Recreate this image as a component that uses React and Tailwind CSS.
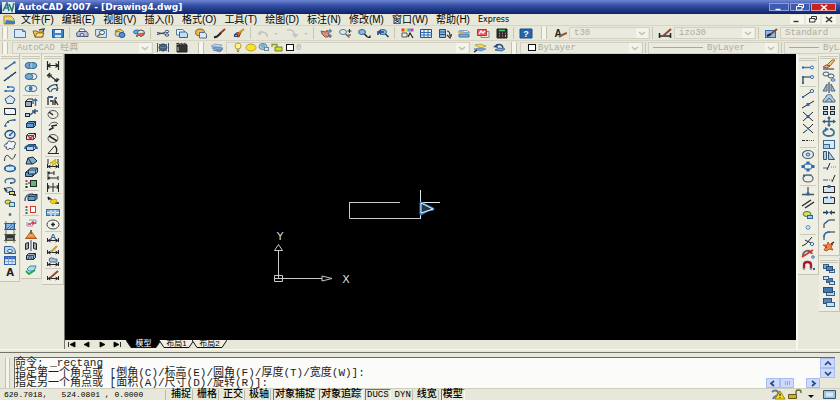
import React from "react";

const K = "#25282b";
const B = "#2a69ad";
const L = "#a9cdee";
const Y = "#f2d020";
const R = "#d8342c";
const G = "#3a9a4c";

const P = ({ d, s = K, f = "none", w = 1 }) => <path d={d} stroke={s} fill={f} strokeWidth={w} />;
const D = ({ x, y, c = B, r = 1 }) => <rect x={x - r} y={y - r} width={2 * r} height={2 * r} fill={c} />;
const O = ({ x = 7, y = 5.5, rx = 4, ry = 3, s = K, f = "none", w = 1 }) => (
  <ellipse cx={x} cy={y} rx={rx} ry={ry} stroke={s} fill={f} strokeWidth={w} />
);
const Q = ({ x, y, w = 4, h = 3, s = K, f = L }) => (
  <rect x={x} y={y} width={w} height={h} stroke={s} fill={f} />
);
const Box = ({ x = 2.5, y = 3.5, f = "#5f9bd3" }) => (
  <g>
    <path d={`M${x} ${y}l2-2h7v4l-2 2h-7z`} fill={f} stroke="#1c2c40" />
    <path d={`M${x} ${y}h7v4M${x + 7} ${y}l2-2`} fill="none" stroke="#1c2c40" strokeWidth="0.8" />
  </g>
);
const Dim = () => <P d="M1.5 6v4M12.5 6v4M2 8.5h10M4.5 7l-2.5 1.5 2.5 1.5M9.5 7l2.5 1.5-2.5 1.5" />;

const art = {
  // standard toolbar
  new: <><P d="M1.5 1.5h8l3 2v6h-11z" s="#4c7ba6" f="#d5ebfb" /><P d="M9.500 1.500v2h3" s="#4c7ba6" /></>,
  open: <><P d="M1 3h4l1 1h5v5H3z" s="#8a6a1c" f="#f0c75a" /><P d="M3 9l2-4h7l-2 4z" s="#8a6a1c" f="#ffe28c" /><P d="M7 2l5-1-1 3" s="#444" w={1.4} /></>,
  save: <><P d="M1.500 1.500h11v8h-11z" s="#1d5796" f="#3b86cf" /><P d="M4 2h6v3H4z" s="none" f="#e6f1fb" /><P d="M4 7h6v2.500H4z" s="none" f="#cfe0f2" /></>,
  print: <><P d="M4 4l1-3h4l2 3" s="#56618c" f="#fff" /><P d="M1.500 5l2-1.500h8l1.500 2v3h-11z" s="#4d5680" f="#b9c0dc" /><O y={7} rx={2} ry={1.5} s="#4d5680" f="#e8e8f4" /></>,
  preview: <><P d="M1.500 1.500h11v8h-8l-3-2z" s="#5d82a8" f="#cbe4f8" /><O x={8} y={4.5} rx={2.5} ry={2} s="#3a5370" f="#f4fbff" /><P d="M6 6L3 9" s="#9c5c28" w={1.6} /></>,
  publish: <><P d="M2 3l5-2 4 3-5 2z" s="#947520" f="#f5d45e" /><O x={5} y={6} rx={3} ry={2.5} s="#777" f="#ead8a0" /><O x={9} y={7} rx={3} ry={2.5} s="#23559c" f="#4f93dd" /></>,
  dwf: <><O x={5} y={4} rx={3.500} ry={2} s="#2a69ad" f="#6ba9e0" /><O x={9} y={5} rx={3.500} ry={3} s="#555" f="#d9e2ea" /><P d="M6 6l3 3 3-4z" s="#a6362b" f="#e46a48" w={0.6} /><D x={5} y={8} c={G} /></>,
  cut: <><P d="M1 4.500l8 1.500M1 6.500l8-2" s="#3b4a60" w={1.200} /><O x={11} y={3.500} rx={1.800} ry={1.200} s="#3e5586" /><O x={11} y={7} rx={1.800} ry={1.200} s="#3e5586" /></>,
  copy: <><P d="M1.500 1.500h6l2 1.500v4h-8z" s="#4c7ba6" f="#e7f4ff" /><P d="M4.500 4h6l2 1.500v4h-8z" s="#2f6698" f="#c0def6" /></>,
  paste: <><O x={6} y={4.500} rx={4.500} ry={3.500} s="#8b6520" f="#e8b856" /><P d="M5.500 4.500h5l2 1.500v4h-7z" s="#5a6d86" f="#dbeaf8" /></>,
  brush: <><P d="M12 1L7 5.500" s="#9a3f23" w={2} /><P d="M1 9.500l3-1 4-3.500" s="#222" w={2} /></>,
  block: <><P d="M2 8l2-3 5-1-2 5z" s="#7b3522" f="#e9582f" /><P d="M7 5l5-4" s="#cc9520" w={2} /><Q x={2.5} y={6.5} w={3} h={2} s="#234a80" f="#78afea" /></>,
  undo: <><P d="M12 9c1-4-4-6-8-4" s="#c3c5c1" w={1.600} /><P d="M2 6l4-4v5z" s="none" f="#c3c5c1" /></>,
  redo: <><P d="M2 2c5-1 7 1 8 5" s="#c3c5c1" w={1.600} /><P d="M6.500 6h7l-3 4z" s="none" f="#c3c5c1" /></>,
  drop: <P d="M5 5h4l-2 2z" s="none" f="#c3c5c1" />,
  pan: <><P d="M2 3l5 1 1-2 2 4-1 3H6L3 6z" s="#91554c" f="#cf8f83" /><P d="M11 1v4M9 3h4M11 6v4M9 8h4" s="#3d5c8a" /></>,
  zoomPlus: <><O x={5} y={4} rx={3.500} ry={2.500} s="#5e7993" f="#d4eafb" /><P d="M7.500 6l4 3.500" s="#805b3b" w={1.500} /><P d="M9.500 3h4M11.500 1v4M10 7h3" s="#333" /></>,
  zoomWin: <><O x={5} y={4} rx={3.500} ry={2.500} s="#3b628e" f="#86b8e6" /><P d="M7.500 6l3 3" s="#222" w={1.500} /><P d="M10 10h3.500V7z" s="none" f="#222" /></>,
  zoomPrev: <><O x={7} y={4} rx={3.500} ry={2.500} s="#3b628e" f="#91c2ec" /><P d="M9.500 6l3 3M2 7V4h6" s="#233f75" w={1.500} /><P d="M1 4l4-3v6z" s="none" f="#2a549b" /></>,
  props: <><D x={3} y={2} c="#e23b3b" r={1.500} /><D x={6} y={2} c="#e4d62a" r={1.500} /><D x={9} y={2} c="#39a5dc" r={1.500} /><D x={12} y={2} c="#c03fb8" r={1.500} /><P d="M2 5h5v4H2z" s="#555" f="#eee" /><P d="M8 9l2-4 3 5" s="#222" w={1.200} /></>,
  design: <><P d="M1.500 1.500h11v8h-11z" s="#1d4e8c" f="#e8f2fb" /><P d="M5 2v8M9 2v8M2 4.500h11M2 7h11" s="#2f6db4" /></>,
  palette: <><P d="M1.500 1.500h6v8h-6z" s="#1d4e8c" f="#8dbbe6" /><P d="M2 4h5M2 6.500h5" s="#1d4e8c" /><P d="M9 3c2 0 3 2 3 5M9 7l3 3 2-4" s="#333" w={1.200} /></>,
  sheet: <><P d="M2 2.500h8l3 2H5z" s="#88a6bf" f="#d6eaf8" /><P d="M2 6h10v3H2z" s="#47779f" f="#77add8" /><P d="M1 4h6" s="#c9a957" w={1.500} /></>,
  markup: <><P d="M1.500 1.500h9v6h-9z" s="#b33" f="#ef5965" /><P d="M3 6l2-3 2 2 2-2" s="#fff" w={1.300} /><P d="M11 3.500h2v6H5V8" s="#889" f="none" /></>,
  calc: <><P d="M2 1h10v9H2z" s="#222" f="#2b2c2c" /><P d="M4 2.500h6" s="#45d673" w={1.500} /><P d="M4 5.500h1M7 5.500h1M10 5.500h1M4 8h1M7 8h1" s="#e5615c" w={1.400} /><P d="M10 8h1" s="#eee" w={1.400} /></>,
  help: <><P d="M1 1h12v9H1z" s="#184f8f" f="#2466ad" /><text x="7" y="9" fontSize="9" fontWeight="bold" textAnchor="middle" fill="#fff" fontFamily="Liberation Sans">?</text></>,
  textStyle: <><text x="5" y="9" fontSize="10" fontWeight="bold" textAnchor="middle" fill="#222" fontFamily="Liberation Sans">A</text><P d="M6 9l3-2 5-2" s="#9a552b" w={2} /></>,
  dimStyle: <><P d="M1.500 5v5M12.500 5v5M1 8h12" w={1.600} /><P d="M5 8l8-7" s="#854b31" w={2} /></>,
  tableStyle: <><Q x={1.5} y={2.5} w={10} h={7} s="#3266ad" f="#8eb9ea" /><P d="M3 8l4-2" s="#222" w={2} /><P d="M7 6l6-5" s="#864a2c" w={2} /></>,
  // workspace and layers
  gear: <><P d="M1.500 1v9M12.500 1v9" s="#42566e" /><O rx={3.500} ry={3} s="#35506e" f="#9fc0df" w={1.800} /><P d="M3 2l8 7M11 2L3 9" s="#35506e" /><O rx={1} ry={1} f="#fff" /></>,
  clap: <><P d="M2 3h10v7H2z" s="#222" f="#333" /><P d="M1 2l3-1v2l3-2v2l3-2v2l2-1" s="#333" /><P d="M3 5v4" s="#bbb" /></>,
  layers: <><P d="M1 4l4-2 7 1-3 3z" s="#6f8eb4" f="#bed2e8" w={0.700} /><P d="M2 6l4-1 7 1-4 2z" s="#5578a6" f="#86a8d1" w={0.700} /><P d="M3 8h7l3-1-3 3z" s="#5578a6" f="#7095c2" w={0.700} /></>,
  bulb: <><O y={4} rx={3} ry={3} s="#b3a23a" f="#fff38a" /><P d="M5.500 8h3M6 9.500h2" s="#777" /></>,
  sun: <O rx={5} ry={3.500} s="#bba21c" f="#f7e233" />,
  freeze: <><O x={6} y={4.500} rx={4} ry={3} s="#5986a2" f="#a5d0e4" /><O x={6} y={4} rx={1.500} ry={1} s="#5986a2" f="#fff" /><Q x={7.5} y={5.5} w={4} h={3} s="#708699" f="#dbe8f0" /></>,
  lock: <><P d="M2 5V2.500h5V5" s="#8a9426" w={1.300} /><P d="M5 5h7v4H5z" s="#77801c" f="#d3df2f" /></>,
  swatch: <Q x={3.500} y={2.500} w={7} h={6} s="#111" f="#fff" />,
  layerNow: <><P d="M2 3l5-1 6 2-5 2z" s="#a29229" f="#f0dd57" w={0.700} /><P d="M1 7l6-1 6 1-5 2z" s="#557bb0" f="#7ea7d8" w={0.700} /><P d="M1 10l3-2" w={1.500} /></>,
  layerPrev: <><P d="M3 8l4-2 6 1-3 2z" s="#3f6698" f="#86acd6" /><P d="M4 5c0-3 6-4 7 1" s="#294b84" w={1.500} /><P d="M1 5l4-3 1 4z" s="none" f="#294b84" /></>,
  // draw
  line: <><P d="M2 9l10-7" s="#2c5f92" w={1.300} /><D x={2.500} y={8.500} /><D x={11.500} y={2.500} /></>,
  xline: <><P d="M1 10L13 1" w={1.300} /><D x={5} y={7} /><D x={9} y={4} /></>,
  pline: <><P d="M2 8h7c3 0 3-4 0-4H5" s="#4d81b6" w={1.300} /><D x={2.500} y={8} /><D x={5} y={4} /><D x={10} y={8} /></>,
  polygon: <P d="M7 1.500l5 3.500-2 4.500H4L2 5z" f="#d6e7f6" s="#3a536f" />,
  rect: <><Q x={1.500} y={2.500} w={11} h={6} f="#eef6fd" /><D x={2} y={8} /><D x={12} y={3} /></>,
  arc: <><P d="M2 9c1-4 4-6 9-6" /><D x={2.500} y={9} /><D x={5} y={5} /><D x={11.500} y={3} /></>,
  circle: <><O rx={5} ry={4} s="#28435f" f="#dbeaf8" w={1.300} /><P d="M7 6l3-3" s={B} w={1.500} /><D x={7} y={6} /></>,
  cloud: <P d="M4 7C0 8 1 3 4 4 4 0 8 1 8 2c4-2 6 2 3 4 2 3-3 4-4 2-2 3-5 1-3-1z" f="#eef4f9" s="#3d4854" />,
  spline: <P d="M1.500 9c0-6 3-7 5-4s4 3 6-3" s="#333d45" />,
  ellipse: <><O rx={5.500} ry={3} s="#2a5d91" f="#d7e9f7" w={1.300} /><D x={7} y={2.500} /><D x={2} y={5.500} /><D x={12} y={5.500} /></>,
  ellArc: <><P d="M3 8C0 5 5 3 9 3.500s4 4 0 4.500" s="#55708c" w={1.500} /><D x={8} y={8} /></>,
  insert: <><O x={6} y={4} rx={4} ry={2.500} s="#35597e" f="#cbdeed" /><Q x={6.500} y={5.500} w={5} h={3} f="#f1dc65" /><P d="M1 2l3 3M10 9h3" s="#222" w={1.400} /></>,
  make: <><O x={5} y={4} rx={3} ry={2} s="#4f6b38" f="#e8df58" /><Q x={6.500} y={4.500} w={5} h={4} s="#35698e" f="#c5e5bc" /></>,
  point: <D x={7} y={5.500} r={1.200} />,
  hatch: <><P d="M2.500 2.500h9v6h-9z" f="#8bb8e4" s="#28568a" /><P d="M1 2.500h12M1 8.500h12M3 0v11M11 0v11M4 8l5-5M7 8l3-3" s="#28568a" w={0.700} /></>,
  gradient: <><P d="M2.500 2.500h9v6h-9z" f="#333" s="#4b4d33" /><P d="M1 2.500h12M1 8.500h12M3 0v11M11 0v11" s="#555844" w={0.800} /><P d="M4 7h6" s="#8892a0" w={2} /></>,
  region: <><P d="M1.500 9.500v-7h6c3 0 5 3 5 7z" f="#b5d5f0" s="#315d88" /><O x={7} y={7} rx={2.500} ry={1.500} s="#315d88" f="#fff" /></>,
  table: <><Q x={1.500} y={1.500} w={11} h={8} s="#315fae" f="#dceafb" /><P d="M2 3h10" s="#3972c0" w={2.500} /><P d="M5.500 2v8M9 2v8M2 6.500h11" s="#7096cc" w={0.800} /></>,
  mtext: <text x="7" y="9" fontSize="10" fontWeight="bold" textAnchor="middle" fill="#222" fontFamily="DejaVu Sans">A</text>,
  // solids
  union: <><O x={5} rx={3.800} s="#31648d" f="#6fa6cf" /><O x={9} rx={3.800} s="#31648d" f="#6fa6cf" /><P d="M7 3v5" s="#c5def1" /></>,
  subtract: <><O x={9} rx={3.800} s="#31648d" f="#f1f6f9" /><O x={5} rx={3.800} s="#31648d" f="#72a8d0" /></>,
  intersect: <><O x={5} rx={3.800} s="#31648d" f="#e8f2fa" /><O x={9} rx={3.800} s="#31648d" f="#e8f2fa" /><O rx={1.500} ry={2.300} s="none" f="#3977a9" /></>,
  extrude: <><Q x={1.500} y={4.500} w={6} h={5} f="#94abc0" /><P d="M2 4l2-2h5v5" /><P d="M11.500 9V2" s={B} w={1.400} /><P d="M9 4l2.500-3L14 4z" s="none" f={B} /></>,
  moveFace: <><Q x={1.500} y={5.500} w={4} h={3} /><P d="M6 7l5-4M11 1v5M8 3h6" s="#35597e" w={1.400} /></>,
  box: <Box />,
  delFace: <><Box f="#dce8f0" /><P d="M4 4l5 4M9 4L4 8" s={R} w={1.600} /></>,
  rotFace: <><Box f="#b9d4e9" /><P d="M1 6c0-5 12-5 12 0" s="#236aa7" w={2} /></>,
  taper: <><P d="M2 9l2-6 5-1 4 4-4 3z" f="#78abd8" /><P d="M4 3l4 6" /></>,
  copyFace: <><Box x={1.500} y={5.500} /><Box x={4.500} y={3} f="#91bddf" /></>,
  colorFace: <><Q x={6.500} y={2.500} w={6} h={6} f="#5fb872" /><D x={2.500} y={3} c={R} /><D x={2.500} y={6} c={G} /><D x={2.500} y={9} c={K} /><P d="M4 5h3" /></>,
  copyEdge: <><Box x={4} y={4.500} /><P d="M1 9c0-5 2-7 8-7" s="#36546f" w={1.300} /></>,
  colorEdge: <><Q x={6.500} y={2.500} w={5} h={6} s={R} f="#fff" /><D x={2.500} y={3} c={R} /><D x={2.500} y={6} c={G} /><D x={2.500} y={9} c={B} /></>,
  imprint: <><P d="M5 3h7v4M3 5v4h6" s="#8c96bb" /><P d="M7 6h5M9 4v4M4 7h3" s="#cf3552" w={1.400} /></>,
  clean: <><P d="M2 9l5-7 5 7z" s="#b36929" f="#eea23f" /><P d="M7 1v4" s="#666" w={2} /><P d="M1 9.500h12" s="#b45532" /></>,
  separate: <><P d="M1.500 3.500l3-1v6l-3 1zM12.500 3.500l-3-1v6l3 1z" f="#8eaabd" /><P d="M7 0v11" s="#445" /></>,
  shell: <><Box f="#9fb9ce" /><O x={6} y={6} rx={2} ry={1.300} s="#37516b" /></>,
  check: <><P d="M3 5l3-3h6l-2 5H5z" s="#3a88a0" f="#aadff0" /><P d="M2 7l3 3 6-4" s="#35a052" w={2} /></>,
  // dimensions
  dimLin: <P d="M1.500 1v9M12.500 1v9M2 5.500h10M4.500 3.500l-2.500 2 2.500 2M9.500 3.500l2.500 2-2.500 2" w={1.200} />,
  dimAli: <P d="M1 4l3-3M10 10l3-3M3 3l8 6M3 6V3h3M8 9h3V6" w={1.200} />,
  dimArc: <><P d="M2 7c0-4 6-6 10-5M5 9c0-3 3-4 6-3" s="#3b566d" w={1.200} /><P d="M1 5l3 4M10 1l2 5" /><D x={11} y={7} /></>,
  dimOrd: <><P d="M2 2v8M4 2h3M4 6h3v4M9 10V5l3 5" w={1.300} /><D x={3} y={2} /><D x={10} y={3} /></>,
  dimRad: <><O rx={5} ry={4} s="#555" /><P d="M7 6L3 3" w={1.500} /></>,
  dimJog: <><P d="M3 5c1-4 7-5 9-2" s="#555" /><P d="M3 9l4-2-1-2 5-1" w={1.500} /></>,
  dimDia: <><O rx={5} ry={4} s="#555" /><P d="M3 3l8 5" w={1.500} /></>,
  dimAng: <><P d="M13 9.500H2l7-8" /><P d="M9 2c2 2 2 5 1 7" w={1.300} /></>,
  dimQuick: <><Dim /><P d="M2 1v5M12 1v5" /><P d="M6 8l1-3H4l6-4-1 3h3z" s="#a8930d" f={Y} w={0.600} /></>,
  dimBase: <P d="M2 1v9M2 3h6M8 1v4M2 8h10M12 6v4M4 2L2 3l2 1M4 7L2 8l2 1" />,
  dimCont: <P d="M1.500 1v9M7 1v9M12.500 1v9M2 5h10M3 3L2 5l1 2M11 3l1 2-1 2" />,
  leader: <><P d="M2 2l4 3M2 2l1 3M9 8h4" w={1.400} /><P d="M4 7l1-2 5-1 1 3-4 2z" s="#b19715" f={Y} w={0.800} /></>,
  tol: <><Q x={0.500} y={2.500} w={13} h={6} s="#3770a6" f="#7fb1da" /><P d="M5 3v6M9 3v6M1 5.500h3M6 5.500h2M10 5.500h3" s="#e4f1fb" w={1.200} /></>,
  center: <><O rx={6} ry={4.500} s="#444" f="#f5f4ec" /><P d="M5 5.500h4M7 3.500v4" w={1.500} /></>,
  dimEdit: <><Dim /><text x="7" y="8" fontSize="9" fontWeight="bold" textAnchor="middle" fill="#28639c" fontFamily="Liberation Sans">A</text></>,
  dimText: <><Dim /><P d="M5 8l6-6" s="#c99b22" w={2} /></>,
  dimUpd: <><Dim /><P d="M3 3c3-3 5 1 8 0v3H4z" s="#54728f" f="#a7c5df" /></>,
  dimSty: <><Dim /><P d="M4 8l8-7" s="#8d492c" w={1.800} /></>,
  // object snaps
  track: <><P d="M1 5.500h11" s="#4681b5" w={1.500} /><D x={2} y={5.500} /><O x={11} rx={1.500} ry={1.500} s={B} f="#fff" /></>,
  from: <><P d="M2 9V3h9" w={1.200} /><D x={2} y={9} /><D x={2} y={3} /><O x={11} y={3} rx={1.500} ry={1.500} s={B} f="#fff" /></>,
  endp: <><P d="M2 9l9-6" /><O x={11} y={3} rx={1.700} ry={1.500} s={B} f="#fff" /><D x={2} y={9} /></>,
  midp: <><P d="M1 9l12-7" /><D x={7} y={5.500} r={1.500} /></>,
  inter: <><P d="M2 1l10 9M12 1L2 10" /><D x={7} y={5.500} r={1.500} /></>,
  appar: <><P d="M2 1l10 9M12 1L8 5M6 7l-4 3" /><D x={7} y={5.500} /></>,
  ext: <><P d="M1 5.500h3M5 5.500h2" w={1.200} /><P d="M8 5.500h1M10 5.500h1M12 5.500h1" s="#555" /></>,
  cen: <><O rx={5.500} ry={4} s="#45596a" w={1.200} /><O rx={2} ry={1.500} s={B} f={L} /></>,
  quad: <><O rx={4} ry={3} s="#4880b4" w={1.400} /><D x={7} y={2} r={1.500} /><D x={7} y={9} r={1.500} /><D x={2} y={5.500} r={1.500} /><D x={12} y={5.500} r={1.500} /></>,
  tan: <><O rx={5} ry={3.500} s="#50616e" w={1.200} /><P d="M2 2h9" s="#50616e" /><D x={3} y={3} /></>,
  perp: <><P d="M7 1v7M1 8.500h12" s="#42565f" w={1.300} /><D x={7} y={8} r={1.500} /></>,
  para: <P d="M1 8l9-6M4 10l9-6" w={1.400} />,
  ins: <><O x={6} y={4} rx={4} ry={2.500} s="#4c753f" f="#d8dd69" /><Q x={6.500} y={5.500} w={5} h={3} s="#2e6299" /></>,
  node: <O rx={2} ry={1.800} s="#4589c2" f="#dff0fc" />,
  near: <><P d="M1 10l4-2 6-7M4 4l6 3" /><O x={11} y={8} rx={1.700} ry={1.500} s={B} f="#fff" /></>,
  none: <><P d="M2 8c0-6 7-7 9-2" s="#666" w={2} /><P d="M1 9l11-7" s={R} w={1.800} /><O x={12} y={9} rx={1.300} ry={1.200} s={B} /></>,
  osnap: <><P d="M3 9V5c0-4 7-4 7 0v4" s="#a71c31" w={2.400} /><P d="M2 9h2M9 9h2" s="#999" w={2} /><D x={13} y={9} /></>,
  // modify
  erase: <><P d="M4 7l6-6h3L8 7z" s="#94702e" f="#ecc860" /><P d="M1 8l3-2 4 1-3 2z" s="#a44" f="#f4a79c" /><P d="M1 10h11" /></>,
  copyObj: <><O x={4} y={3} rx={3} ry={2} s="#41596d" /><O x={9} y={5} rx={3} ry={2} s="#41596d" /><O x={11} y={9} rx={2} ry={1.200} s="#2a69ad" /></>,
  mirror: <><P d="M5 2v7H1zM9 2v7h4z" s="#456783" f="#9fc0dd" /><P d="M7 0v11" /></>,
  offset: <><P d="M1 9c0-4 3-3 3-6 2-2 5-2 6 0 0 3 3 2 3 6z" f="#afcbe2" s="#41637f" /><P d="M4 9c0-3 2-1 3-4 1 2 3 1 3 4" s="#41637f" /></>,
  array: <><Q x={1.500} y={1.500} w={4} h={3} /><Q x={8.500} y={1.500} w={4} h={3} /><Q x={1.500} y={6.500} w={4} h={3} /><Q x={8.500} y={6.500} w={4} h={3} /></>,
  move: <><P d="M7 1v9M1 5.500h12" s="#355e82" w={1.500} /><P d="M5 2.500L7 0l2 2.500zM5 8.500L7 11l2-2.500zM3 3.500L0 5.500l3 2zM11 3.500l3 2-3 2z" s="none" f="#355e82" /></>,
  rotate: <><P d="M5 2c-6 2-4 7 2 7 7 0 6-7 1-7" s="#3f7196" w={1.800} /><P d="M3 0v5l4-3z" s="none" f="#3f7196" /></>,
  scale: <><Q x={1.500} y={1.500} w={11} h={8} s="#3a6990" f="#dceaf4" /><Q x={1.500} y={5.500} w={6} h={4} s="#3a6990" /></>,
  stretch: <><P d="M1.500 1.500h3v8h-3zM6.500 1.500l6 8h-6z" s="#37526a" f="#b0cee6" /></>,
  trim: <><P d="M1 7h5" s={B} /><P d="M5 9l3-7" /><P d="M9 6h1M11 6h1M13 6h1" s="#568cba" /></>,
  extend: <><P d="M1 7h5M7 7h1M9 7h1" s={B} /><P d="M10 9l3-7" /></>,
  breakPt: <><Q x={1.500} y={2.500} w={11} h={6} f="#d4e4f2" /><D x={7} y={2.500} r={1.500} /></>,
  breakObj: <><P d="M5 2.500H1.500v6h11v-6H9" f="#d4e4f2" /><D x={5} y={2.500} /><D x={9} y={2.500} /></>,
  join: <><P d="M1 5.500h4M9 5.500h4" w={1.500} /><P d="M4 3l3 2.500L4 8zM10 3L7 5.500 10 8z" s="none" f="#24506f" /></>,
  chamfer: <><P d="M2 10V6l5-4h6" /><P d="M2 6l5-4" s={B} w={1.600} /></>,
  fillet: <><P d="M2 10V6c0-3 3-4 5-4h6" /><P d="M2 7c0-4 3-5 6-5" s={B} w={1.600} /></>,
  explode: <><P d="M2 9l2-3-3-2 4 0 1-3 2 3 3-1-2 3 2 3-4-1-2 2z" s="#a84018" f="#f08a38" w={0.800} /><P d="M9 3l3-2" w={1.500} /><D x={4} y={6} c={R} /></>,
  front: <><Q x={1.500} y={1.500} w={5} h={4} s="#365f89" f="#7da7ce" /><Q x={7.500} y={6.500} w={5} h={3} s="#365f89" f="#bdd3e7" /><Q x={4.500} y={3.500} w={6} h={4} s="#27517c" f="#4d82b4" /></>,
  back: <><Q x={4.500} y={3.500} w={6} h={4} s="#365f89" f="#557fa8" /><Q x={1.500} y={1.500} w={5} h={3} s="#365f89" f="#cfdeeb" /><Q x={7.500} y={6.500} w={5} h={3} s="#365f89" f="#cfdeeb" /></>,
  above: <><Q x={4.500} y={5.500} w={8} h={4} s="#365f89" f="#b9cfe3" /><Q x={1.500} y={1.500} w={9} h={5} s="#27517c" f="#4478aa" /></>,
  under: <><Q x={1.500} y={1.500} w={8} h={5} s="#27517c" f="#5585b2" /><Q x={4.500} y={5.500} w={8} h={4} s="#365f89" f="#d1dfec" /></>,
};

const Icon = ({ name }) => (
  <svg viewBox="0 0 14 11" className="h-[11px] w-[14px] shrink-0" aria-hidden="true">{art[name]}</svg>
);

const Tool = ({ name, className = "w-[19px]" }) => (
  <button type="button" aria-label={name} className={`flex h-[11px] shrink-0 items-center justify-center ${className}`}>
    <Icon name={name} />
  </button>
);

const Sep = () => <span className="mx-[2px] h-3 w-px shrink-0 bg-[#c9c7b6]" />;
const Grip = () => <span className="mx-[3px] h-3 w-[6px] shrink-0 border-x border-[#c3c1b0] bg-[#f6f5ec]" />;

const Chevron = () => (
  <svg viewBox="0 0 12 10" className="pointer-events-none absolute right-px h-[10px] w-3" aria-hidden="true">
    <rect width="12" height="10" fill="#f4f3ec" />
    <path d="M3 4l3 2.500L9 4" fill="none" stroke="#c2c0b4" strokeWidth="1.500" />
  </svg>
);

function Combo({ label, value, width, icons = [], line = "" }) {
  return (
    <div className={`relative flex h-3 shrink-0 items-center border border-[#d2d0c2] bg-[#ebeadf] pl-1 ${width}`}>
      {icons.map((n) => <Tool key={n} name={n} className="w-[13px]" />)}
      {line && <span className={`mr-1 h-px shrink-0 bg-[#aaa99a] ${line}`} />}
      <select aria-label={label} className="h-[10px] min-w-0 flex-1 appearance-none bg-transparent font-['Liberation_Mono','Noto_Sans_CJK_SC',monospace] text-[9px] leading-[10px] text-[#aeac9d]">
        <option>{value}</option>
      </select>
      <Chevron />
    </div>
  );
}

function Dock({ label, items, className }) {
  return (
    <div role="toolbar" aria-label={label} className={`flex flex-col items-center justify-between border-r border-b border-[#c6c4b4] bg-[#efeee2] pt-[2px] pb-[3px] ${className}`}>
      <span className="h-[3px] w-[18px] border-y border-[#c9c7b8]" />
      {items.split(" ").map((n, i) =>
        n === "|" ? <span key={i} className="h-px w-4 bg-[#cbc9ba]" /> : <Tool key={i} name={n} />
      )}
    </div>
  );
}

const menus = ["文件(F)", "编辑(E)", "视图(V)", "插入(I)", "格式(O)", "工具(T)", "绘图(D)", "标注(N)", "修改(M)", "窗口(W)", "帮助(H)", "Express"];

const Glyph = ({ kind }) => (
  <svg viewBox="0 0 10 7" className="h-[7px] w-[10px]" fill="none" stroke="currentColor" aria-hidden="true">
    {kind === "min" && <path d="M1.500 5.500h5" strokeWidth="1.400" />}
    {kind === "restore" && <path d="M3.500 2V.500h5v3H7M1.500 2.500H7v3.500H1.500z" />}
    {kind === "close" && <path d="M2 1l6 5M8 1L2 6" strokeWidth="1.600" />}
  </svg>
);

function TitleBar() {
  return (
    <header className="flex h-[14px] shrink-0 items-center bg-linear-to-b from-[#6f86d2] via-[#3450a4] via-40% to-[#0d2168] pr-1 pl-[2px]">
      <svg viewBox="0 0 13 11" className="mr-[3px] h-[11px] w-[13px]" aria-hidden="true">
        <rect width="13" height="11" fill="#dce9e8" />
        <path d="M1 9l4-8 2 8M2 6h4M7 2l3 7 2-8" fill="none" stroke="#2d7886" strokeWidth="1.600" />
      </svg>
      <h1 className="flex-1 font-['DejaVu_Sans',sans-serif] text-[9px] leading-3 font-bold text-white">AutoCAD 2007 - [Drawing4.dwg]</h1>
      <div className="flex gap-px text-white">
        {["min", "restore", "close"].map((k) => (
          <button key={k} type="button" aria-label={k} className={`flex h-[8px] items-center justify-center border ${k === "close" ? "w-[25px] border-[#e79a94] bg-[#c8231f]" : "w-[20px] border-[#8c9fdc] bg-[#4059b0]"}`}>
            <Glyph kind={k} />
          </button>
        ))}
      </div>
    </header>
  );
}

function MenuBar() {
  return (
    <nav className="flex h-[11px] shrink-0 items-center gap-[8px] pr-1 pl-[3px] font-['Liberation_Sans','Noto_Sans_CJK_SC',sans-serif] text-[10px] leading-[10px] text-black">
      <svg viewBox="0 0 13 10" className="-mr-[3px] h-[10px] w-[13px]" aria-hidden="true">
        <path d="M1 1h7l3 3v5H1z" fill="#f1d46d" stroke="#b08a28" />
        <path d="M3 5l9 1v3H2z" fill="#397bc4" />
      </svg>
      {menus.map((m) => (
        <button key={m} type="button" className={m === "Express" ? "font-['DejaVu_Sans',sans-serif] text-[8px]" : ""}>{m}</button>
      ))}
      <div className="ml-auto flex gap-[2px]">
        {["min", "restore", "close"].map((k) => (
          <button key={k} type="button" aria-label={`${k} drawing`} className="flex h-[9px] w-[14px] items-center justify-center bg-[#f7f6ee] text-[#333]"><Glyph kind={k} /></button>
        ))}
      </div>
    </nav>
  );
}

const standard = "new open save | print preview publish dwf | cut copy paste brush block |".split(" ");
const views = "pan zoomPlus zoomWin zoomPrev | props design palette sheet markup calc |".split(" ");
const strip = (list) => list.map((n, i) => (n === "|" ? <Sep key={i} /> : <Tool key={i} name={n} />));

function Toolbars() {
  return (
    <>
      <div role="toolbar" aria-label="标准" className="flex h-[15px] shrink-0 items-center overflow-hidden border-t border-[#d6d4c5]">
        <span className="mx-[2px] h-3 w-[6px] shrink-0 border-x border-[#c3c1b0] bg-[#f6f5ec]" />
        {strip(standard)}
        <Tool name="undo" className="w-[17px]" />
        <Tool name="drop" className="w-[12px]" />
        <Tool name="redo" className="w-[19px]" />
        <Tool name="drop" className="w-[10px]" />
        <Sep />
        {strip(views)}
        <Tool name="help" />
        <span className="w-[3px] shrink-0" />
        <Grip />
        <Tool name="textStyle" />
        <Combo label="文字样式" value="t30" width="w-[81px]" />
        <Sep />
        <Tool name="dimStyle" />
        <Combo label="标注样式" value="izo30" width="w-[82px]" />
        <Sep />
        <Tool name="tableStyle" />
        <Combo label="表格样式" value="Standard" width="w-[100px]" />
      </div>
      <div role="toolbar" aria-label="图层" className="flex h-[14px] shrink-0 items-center overflow-hidden border-t border-[#d6d4c5]">
        <span className="mx-[2px] h-3 w-[6px] shrink-0 border-x border-[#c3c1b0] bg-[#f6f5ec]" />
        <span className="w-[2px] shrink-0" />
        <Combo label="工作空间" value="AutoCAD 经典" width="w-[141px]" />
        <Tool name="gear" />
        <Tool name="clap" />
        <span className="w-1 shrink-0" />
        <Grip />
        <Tool name="layers" />
        <Combo label="图层" value="0" width="w-[244px]" icons={["bulb", "sun", "freeze", "lock", "swatch"]} />
        <Tool name="layerNow" />
        <Tool name="layerPrev" />
        <Grip />
        <Combo label="颜色" value="ByLayer" width="w-[123px]" icons={["swatch"]} />
        <Sep />
        <Combo label="线型" value="ByLayer" width="w-[131px]" line="w-[50px]" />
        <Sep />
        <Combo label="线宽" value="ByLayer" width="w-[131px]" line="w-[30px]" />
      </div>
    </>
  );
}

function Drawing() {
  return (
    <div className="min-h-0 flex-1 overflow-hidden bg-black">
      <svg viewBox="0 0 730 286" className="h-[286px] w-[730px]" fill="none" stroke="#c9c9c9" role="img" aria-label="Drawing4">
        <path d="M284.500 148.500h50.500M284.500 148v16.500H355.500" />
        <path d="M355.500 136v29M356 148.500h19" stroke="#e6e6e6" />
        <path d="M213.500 196v28.500H257M209.500 221.500h8v6h-8zM209.500 224.500h8" />
        <path d="M213.500 190.500l-4 6h8zM257 222l10 2.500-10 2.500z" />
        <g fill="#dcdcdc" stroke="none" fontFamily="DejaVu Sans" fontWeight="400" fontSize="11" textAnchor="middle">
          <text x="215" y="186">Y</text>
          <text x="281" y="229">X</text>
        </g>
        <path d="M356 149l12 6-5 1-7 4z" fill="#15293d" stroke="#2d7fca" strokeWidth="3" strokeLinejoin="round" />
        <path d="M356 149l12 6-12 4z" fill="#26374a" stroke="#eef7ff" />
      </svg>
    </div>
  );
}

function LayoutTabs() {
  const tabs = [["模型", true], ["布局1", false], ["布局2", false]];
  return (
    <div className="flex h-[9px] shrink-0 items-start font-['Liberation_Sans','Noto_Sans_CJK_SC',sans-serif] text-[8px] leading-[8px] text-black">
      {["M3.500 1v5M10 1v5L5 3.500z", "M9 1v5L4 3.500z", "M5 1v5l5-2.500z", "M4 1v5l5-2.500zM10.500 1v5"].map((d) => (
        <button key={d} type="button" aria-label="翻页" className="h-[8px] w-[15px]">
          <svg viewBox="0 0 14 7" className="h-[7px] w-[14px]"><path d={d} fill="#000" stroke="#000" strokeWidth="0.800" /></svg>
        </button>
      ))}
      <div role="tablist" className="ml-px flex">
        {tabs.map(([t, on]) => (
          <button key={t} type="button" role="tab" aria-selected={on} className="relative -mr-[2px] flex h-[9px] w-[35px] items-start justify-center">
            <svg viewBox="0 0 35 9" className="absolute inset-0 h-full w-full" aria-hidden="true">
              <path d="M0 0l5 7.500h25L35 0" fill={on ? "#000" : "#efeee4"} stroke="#111" />
            </svg>
            <span className={`relative ${on ? "text-white" : ""}`}>{t}</span>
          </button>
        ))}
      </div>
    </div>
  );
}

const ScrollBtn = ({ d, label, className }) => (
  <button type="button" aria-label={label} className={`flex items-center justify-center border border-[#a9bdf0] bg-[#cbdafd] ${className}`}>
    <svg viewBox="0 0 10 7" className="h-[7px] w-[10px]"><path d={d} fill="none" stroke="#2b4684" strokeWidth="1.700" /></svg>
  </button>
);

function CommandLine() {
  return (
    <section aria-label="命令行" className="flex h-[36px] shrink-0 border-t border-[#74746c] pt-1 font-['Liberation_Mono','Noto_Sans_CJK_SC',monospace] text-[11px] leading-[10px] text-[#1d1d1d]">
      <span className="mt-px mr-[4px] ml-[5px] w-[5px] shrink-0 border-x border-[#c3c1b0] bg-[#f6f5ec]" />
      <div className="mr-[5px] flex min-w-0 flex-1 flex-col border-t border-l border-[#6a6a62]">
        <div className="flex h-[20px]">
          <div className="flex-1 bg-[#fbfbfa] whitespace-pre">
            <p>命令: _rectang</p>
            <p>指定第一个角点或 [倒角(C)/标高(E)/圆角(F)/厚度(T)/宽度(W)]:</p>
          </div>
          <div className="flex w-[15px] flex-col">
            <ScrollBtn label="上" d="M2 5l3-3 3 3" className="flex-1" />
            <ScrollBtn label="下" d="M2 2l3 3 3-3" className="flex-1" />
          </div>
        </div>
        <div className="flex h-[10px] bg-[#fbfbfa]">
          <label htmlFor="command" className="whitespace-pre">指定另一个角点或 [面积(A)/尺寸(D)/旋转(R)]:</label>
          <input id="command" className="min-w-0 flex-1 bg-transparent outline-none" />
          <ScrollBtn label="左" d="M6 1L3 3.500 6 6" className="w-[14px]" />
          <span className="flex w-[14px] items-center justify-center gap-px border border-[#a9bdf0] bg-[#cbdafd]">
            <i className="h-1 w-px bg-[#8ea6de]" /><i className="h-1 w-px bg-[#8ea6de]" /><i className="h-1 w-px bg-[#8ea6de]" />
          </span>
          <span className="w-3" />
          <ScrollBtn label="右" d="M4 1l3 2.500L4 6" className="w-[14px]" />
          <span className="w-[15px] bg-[#e8e8da]" />
        </div>
      </div>
    </section>
  );
}

const modes = [["捕捉", 0], ["栅格", 0], ["正交", 0], ["极轴", 0], ["对象捕捉", 1], ["对象追踪", 1], ["DUCS", 1], ["DYN", 0], ["线宽", 0], ["模型", 1]];

function StatusBar() {
  return (
    <footer className="flex h-[12px] shrink-0 items-center border-t border-[#d0cebf] pr-[3px] pl-1 font-['Liberation_Mono','Noto_Sans_CJK_SC',monospace] text-[10px] leading-[10px] text-black">
      <output className="h-[10px] w-[162px] border-r border-[#bcbaa9] text-[8px] whitespace-pre">620.7018,   524.0801 , 0.0000</output>
      <div className="ml-[3px] flex gap-[2px]">
        {modes.map(([m, on]) => (
          <button key={m} type="button" aria-pressed={!!on} className={`h-[11px] border-x px-px font-medium ${on ? "border-t border-t-[#77766b] border-r-[#f9f9f2] border-l-[#77766b] leading-[10px]" : "border-t border-t-transparent border-r-[#bdbbab] border-l-transparent"} ${/[DU]/.test(m) ? "text-[9px] font-bold" : ""}`}>{m}</button>
        ))}
      </div>
      <div className="ml-auto flex items-center gap-1">
        <svg viewBox="0 0 68 11" className="h-[11px] w-[68px]" aria-label="状态托盘" role="img">
          <path d="M3 3c3-3 7-1 6 2s-4 2-5 5" fill="none" stroke="#62799c" strokeWidth="2" />
          <path d="M11 2l5 8H6z" fill="#f5dd26" stroke="#9a8510" /><path d="M11 4.500v2.500M11 8v1" stroke="#111" />
          <path d="M27 5V2.500c0-2 5-2 5 0V4" fill="none" stroke="#67601c" strokeWidth="1.300" /><path d="M19.500 5.500h8v4h-8z" fill="#c9b42c" stroke="#645912" />
          <path d="M39 6h6l-3 3z" fill="#111" />
          <path d="M54.500 1.500h12v8h-12z" fill="#9fc4dc" stroke="#38566d" /><path d="M57 3.500h7v4h-7z" fill="#d3ebf8" />
        </svg>
      </div>
    </footer>
  );
}

export default function App() {
  return (
    <div className="flex h-screen flex-col overflow-hidden bg-[#e8e8da]">
      <TitleBar />
      <MenuBar />
      <Toolbars />
      <main className="flex min-h-0 flex-1">
        <div className="flex shrink-0 items-start">
          <Dock label="绘图" className="h-[228px] w-[20px]" items="line xline pline polygon rect arc circle cloud spline ellipse ellArc insert make point hatch gradient region table mtext" />
          <Dock label="实体编辑" className="ml-px h-[225px] w-[21px]" items="union subtract intersect | extrude moveFace box delFace rotFace taper copyFace colorFace | copyEdge colorEdge | imprint clean separate shell check" />
          <Dock label="标注" className="h-[231px] w-[22px]" items="dimLin dimAli dimArc dimOrd | dimRad dimJog dimDia dimAng | dimQuick dimBase dimCont | leader tol center | dimEdit dimText dimUpd | dimSty" />
        </div>
        <div className="flex min-w-0 flex-1 flex-col border-r-2 border-l border-r-[#f8f8f2] border-l-[#77766c]">
          <Drawing />
          <LayoutTabs />
        </div>
        <div className="flex shrink-0 items-start">
          <Dock label="对象捕捉" className="mt-[2px] h-[219px] w-[21px]" items="track from | endp midp inter appar ext | cen quad tan | perp para ins node | near none osnap" />
          <div className="w-[21px]">
            <Dock label="修改" className="h-[202px] w-full" items="erase copyObj mirror offset array move rotate scale stretch trim extend breakPt breakObj join chamfer fillet explode" />
            <Dock label="绘图次序" className="mt-[2px] h-[54px] w-full" items="front back above under" />
          </div>
        </div>
      </main>
      <div className="h-[3px] shrink-0 border-t border-[#f8f8f2]" />
      <CommandLine />
      <StatusBar />
    </div>
  );
}
